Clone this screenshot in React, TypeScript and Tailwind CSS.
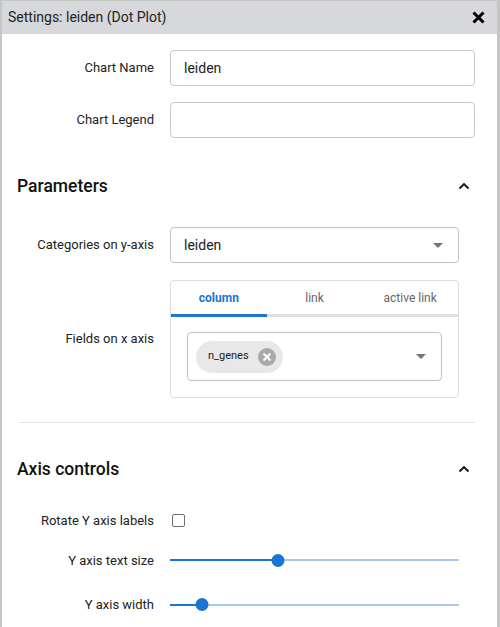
// App.tsx — chart settings dialog
const font = { fontFamily: 'Roboto, "Liberation Sans", sans-serif' }

function Chevron() {
    return (
        <svg width="12" height="8" viewBox="0 0 12 8" className="mr-[5px]">
            <polyline points="1.5,6.5 6,2 10.5,6.5" fill="none" stroke="#111" strokeWidth="1.8" />
        </svg>
    )
}

function Caret() {
    return (
        <svg width="10" height="5" viewBox="0 0 10 5">
            <polygon points="0,0 10,0 5,5" fill="#757575" />
        </svg>
    )
}

function Row({ label, children, top }: { label: string; children: React.ReactNode; top: string }) {
    return (
        <div className={`flex items-center ${top}`}>
            <div className="w-[137px] shrink-0 text-right text-[13px] text-[#222]">{label}</div>
            <div className="ml-4 flex-1">{children}</div>
        </div>
    )
}

function Slider({ pct }: { pct: number }) {
    return (
        <div className="relative h-[14px] w-[289px] flex items-center">
            <div className="h-[2px] w-full bg-[#a6c9ee]" />
            <div className="absolute left-0 h-[2px] bg-[#1976d2]" style={{ width: `${pct}%` }} />
            <div
                className="absolute h-[13px] w-[13px] -translate-x-1/2 rounded-full bg-[#1976d2]"
                style={{ left: `${pct}%` }}
            />
        </div>
    )
}

function Heading({ title, top }: { title: string; top: string }) {
    return (
        <div className={`flex items-center justify-between ${top}`}>
            <h2 className="text-[17.5px] font-medium leading-6 text-[#111]">{title}</h2>
            <Chevron />
        </div>
    )
}

export default function App() {
    return (
        <div
            className="h-[627px] w-[500px] overflow-hidden border-l-2 border-r-[3px] border-t border-[#c6c6c6] bg-white"
            style={font}
        >
            {/* Title bar */}
            <div className="flex h-[33px] items-center justify-between bg-[#d7d8dc] pl-[6px] pr-[12px]">
                <span className="text-[14px] text-[#222]">Settings: leiden (Dot Plot)</span>
                <svg width="13" height="13" viewBox="0 0 13 13">
                    <path d="M1.5 1.5 L11.5 11.5 M11.5 1.5 L1.5 11.5" stroke="#000" strokeWidth="3" />
                </svg>
            </div>

            <div className="pl-[15px] pr-[22px]">
                <Row label="Chart Name" top="mt-4">
                    <div className="flex h-9 w-[305px] items-center rounded border border-[#c9c9c9] px-[13px] text-[14px] text-[#222]">
                        leiden
                    </div>
                </Row>
                <Row label="Chart Legend" top="mt-4">
                    <div className="h-9 w-[305px] rounded border border-[#c9c9c9]" />
                </Row>

                <Heading title="Parameters" top="mt-[36px]" />

                <Row label="Categories on y-axis" top="mt-[29px]">
                    <div className="flex h-9 w-[289px] items-center justify-between rounded border border-[#c2c2c2] pl-[13px] pr-[15px] text-[14px] text-[#222]">
                        leiden
                        <Caret />
                    </div>
                </Row>

                <Row label="Fields on x axis" top="mt-[17px]">
                    <div className="w-[289px] rounded border border-[#dcdcdc]">
                        <div className="flex h-[33px] items-center text-[12px]">
                            <div className="flex-1 text-center font-bold text-[#1976d2]">column</div>
                            <div className="flex-1 text-center text-[#666]">link</div>
                            <div className="flex-1 text-center text-[#666]">active link</div>
                        </div>
                        <div className="flex h-[3px] bg-[#e0e0e0]">
                            <div className="w-1/3 bg-[#1976d2]" />
                        </div>
                        <div className="px-4 pb-[16px] pt-[15px]">
                            <div className="flex h-[49px] items-center justify-between rounded border border-[#c2c2c2] pl-2 pr-[15px]">
                                <div className="flex h-8 items-center gap-[9px] rounded-full bg-[#e8e8e8] pl-3 pr-[7px] text-[11px] text-[#222]">
                                    n_genes
                                    <svg width="18" height="18" viewBox="0 0 18 18">
                                        <circle cx="9" cy="9" r="9" fill="#a9a9a9" />
                                        <path d="M5.5 5.5 L12.5 12.5 M12.5 5.5 L5.5 12.5" stroke="#fff" strokeWidth="2" />
                                    </svg>
                                </div>
                                <Caret />
                            </div>
                        </div>
                    </div>
                </Row>

                <div className="ml-[2px] mt-[24px] h-px bg-[#dfe6f1]" />

                <Heading title="Axis controls" top="mt-[34px]" />

                <Row label="Rotate Y axis labels" top="mt-[30px]">
                    <div className="ml-[2px] h-[13px] w-[13px] rounded-[2px] border-[1.5px] border-[#6f6f6f]" />
                </Row>
                <Row label="Y axis text size" top="mt-[20px]">
                    <Slider pct={37.5} />
                </Row>
                <Row label="Y axis width" top="mt-[25px]">
                    <Slider pct={11} />
                </Row>
            </div>
        </div>
    )
}
